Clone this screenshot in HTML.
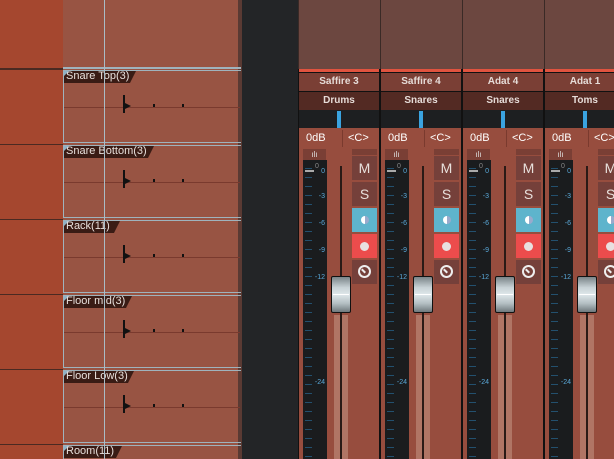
<!DOCTYPE html>
<html style="overflow:hidden;width:614px;height:459px"><head><style>
*{margin:0;padding:0;box-sizing:border-box}
body{width:614px;height:459px;overflow:hidden;position:relative;background:#232527;font-family:"Liberation Sans",sans-serif}
#c{position:absolute;left:0;top:0;width:614px;height:459px;overflow:hidden}
.a{position:absolute}
</style></head><body>
<div id="c">
<div class="a" style="left:0;top:0;width:63px;height:459px;background:#a5472f"></div>
<div class="a" style="left:63px;top:0;width:178px;height:459px;background:#985443"></div>
<div class="a" style="left:238px;top:0;width:4px;height:459px;background:#5a3a33"></div>
<div class="a" style="left:298px;top:0;width:316px;height:69px;background:#6c4740"></div>
<div id="d"></div>
</div>
<script>
let h='';
const lanes=[70,145,220,295,370,445];
const names=['Snare Top(3)','Snare Bottom(3)','Rack(11)','Floor mid(3)','Floor Low(3)','Room(11)'];
const tw=[72,90,56,68,70,58];
h+=`<div class="a" style="left:0;top:68px;width:63px;height:1px;background:#4a2a22"></div>`;
h+=`<div class="a" style="left:63px;top:67px;width:178px;height:2px;background:#9fb3bd"></div>`;
lanes.forEach((y,i)=>{
 h+=`<div class="a" style="left:0;top:${y-1}px;width:63px;height:1px;background:#4a2a22"></div>`;
 h+=`<div class="a" style="left:63px;top:${y}px;width:178px;height:1px;background:#9fb3bd"></div>`;
 if(i<5)h+=`<div class="a" style="left:63px;top:${y+72}px;width:178px;height:1px;background:#9fb3bd"></div>`;
 h+=`<div class="a" style="left:63px;top:${y}px;width:1px;height:${i<5?73:14}px;background:#9fb3bd"></div>`;
 if(i<5)h+=`<div class="a" style="left:64px;top:${y+37}px;width:176px;height:1px;background:#7a3a2e"></div>`;
 h+=`<div class="a" style="left:64px;top:${y+1}px;height:12px;width:${tw[i]}px;background:#3a1c15;clip-path:polygon(0 0,100% 0,calc(100% - 6px) 100%,0 100%)"></div>`;
 h+=`<div class="a" style="left:64px;top:${y+1}px;width:0;height:0;border-top:5px solid #8fb2c6;border-right:5px solid transparent"></div>`;
 h+=`<div class="a" style="left:66px;top:${y}px;font-size:11px;color:#e8e0dc;line-height:13px;white-space:nowrap">${names[i]}</div>`;
 if(i<5){h+=`<div class="a" style="left:123px;top:${y+25}px;width:2px;height:18px;background:#111"></div><div class="a" style="left:125px;top:${y+33}px;width:6px;height:6px;background:#111;clip-path:polygon(0 0,100% 50%,0 100%)"></div>`;
 h+=`<div class="a" style="left:153px;top:${y+34}px;width:2px;height:3px;background:#111"></div><div class="a" style="left:182px;top:${y+34}px;width:2px;height:3px;background:#111"></div>`;}
});
h+=`<div class="a" style="left:104px;top:0;width:1px;height:459px;background:#a9bcc6"></div>`;
const st=[['Saffire 3','Drums'],['Saffire 4','Snares'],['Adat 4','Snares'],['Adat 1','Toms']];
const marks=[[173,'0'],[198,'-3'],[225,'-6'],[252,'-9'],[279,'-12'],[384,'-24']];
st.forEach((s,i)=>{
 const x=298+i*82;
 h+=`<div class="a" style="left:${x}px;top:0;width:1px;height:69px;background:#3a2a26"></div>`;
 h+=`<div class="a" style="left:${x}px;top:69px;width:82px;height:390px;background:#111"></div>`;
 h+=`<div class="a" style="left:${x+1}px;top:69px;width:80px;height:3px;background:#e0533f"></div>`;
 h+=`<div class="a" style="left:${x+1}px;top:73px;width:80px;height:18px;background:#7a3f35;color:#e6dcd8;font-size:10px;font-weight:bold;text-align:center;line-height:18px">${s[0]}</div>`;
 h+=`<div class="a" style="left:${x+1}px;top:92px;width:80px;height:18px;background:#532a23;color:#e6dcd8;font-size:10px;font-weight:bold;text-align:center;line-height:18px">${s[1]}</div>`;
 h+=`<div class="a" style="left:${x+1}px;top:110px;width:80px;height:18px;background:#1d1f21"></div>`;
 h+=`<div class="a" style="left:${x+39}px;top:111px;width:4px;height:17px;background:#3aa3e0"></div>`;
 h+=`<div class="a" style="left:${x+1}px;top:128px;width:80px;height:331px;background:#974d3e"></div>`;
 h+=`<div class="a" style="left:${x+44}px;top:130px;width:1px;height:17px;background:#7a3a2e"></div>`;
 h+=`<div class="a" style="left:${x+8}px;top:132px;font-size:11px;color:#fff">0dB</div>`;
 h+=`<div class="a" style="left:${x+50}px;top:132px;font-size:11px;color:#fff">&lt;C&gt;</div>`;
 h+=`<div class="a" style="left:${x+5}px;top:149px;width:23px;height:11px;background:#7a3f35;color:#ddd;font-size:8px;text-align:center;line-height:11px">ılı</div>`;
 h+=`<div class="a" style="left:${x+5}px;top:160px;width:24px;height:299px;background:#1a1c1e"></div>`;
 for(let t=168;t<459;t+=9)h+=`<div class="a" style="left:${x+7}px;top:${t}px;width:7px;height:1px;background:#23506e"></div>`;
 h+=`<div class="a" style="left:${x+7}px;top:170px;width:9px;height:2px;background:#aaa"></div><div class="a" style="left:${x+17}px;top:163px;font-size:7px;color:#888">0</div>`;
 marks.forEach(m=>h+=`<div class="a" style="left:${x+14}px;top:${m[0]-5}px;width:13px;text-align:right;font-size:7px;color:#5aa8d8">${m[1]}</div>`);
 h+=`<div class="a" style="left:${x+36}px;top:315px;width:14px;height:144px;background:#b07565"></div>`;
 h+=`<div class="a" style="left:${x+42}px;top:166px;width:2px;height:293px;background:#2a1a16"></div>`;
 h+=`<div class="a" style="left:${x+33}px;top:276px;width:20px;height:37px;border:1px solid #111;border-radius:2px;background:linear-gradient(#7a8488,#c8d2d6 30%,#dfe7ea 50%,#b5c0c4 75%,#6f797d)"></div>`;
 h+=`<div class="a" style="left:${x+35}px;top:294px;width:16px;height:1px;background:#fff"></div>`;
 h+=`<div class="a" style="left:${x+54}px;top:149px;width:25px;height:6px;background:#7a3f35"></div>`;
 const b=[['M','#75403a'],['S','#75403a'],['','#5eb4cc'],['','#ec4c4c'],['','#75403a']];
 b.forEach((q,j)=>{const y=156+j*26;
  h+=`<div class="a" style="left:${x+54}px;top:${y}px;width:25px;height:24px;background:${q[1]};color:#e8e0dc;font-size:14px;text-align:center;line-height:24px">${q[0]}</div>`;
  if(j==2)h+=`<div class="a" style="left:${x+63}px;top:${y+8}px;width:8px;height:8px;border-radius:50%;background:linear-gradient(90deg,#fff 50%,#9ac 50%)"></div>`;
  if(j==3)h+=`<div class="a" style="left:${x+62}px;top:${y+8}px;width:9px;height:9px;border-radius:50%;background:#e8e0e0"></div>`;
  if(j==4)h+=`<div class="a" style="left:${x+60}px;top:${y+5}px;width:13px;height:13px;border-radius:50%;border:2px solid #eee"></div><div class="a" style="left:${x+63}px;top:${y+10}px;width:5px;height:2px;background:#eee;transform:rotate(45deg)"></div>`;
 });
});
document.getElementById('d').innerHTML=h;
</script>
</body></html>
